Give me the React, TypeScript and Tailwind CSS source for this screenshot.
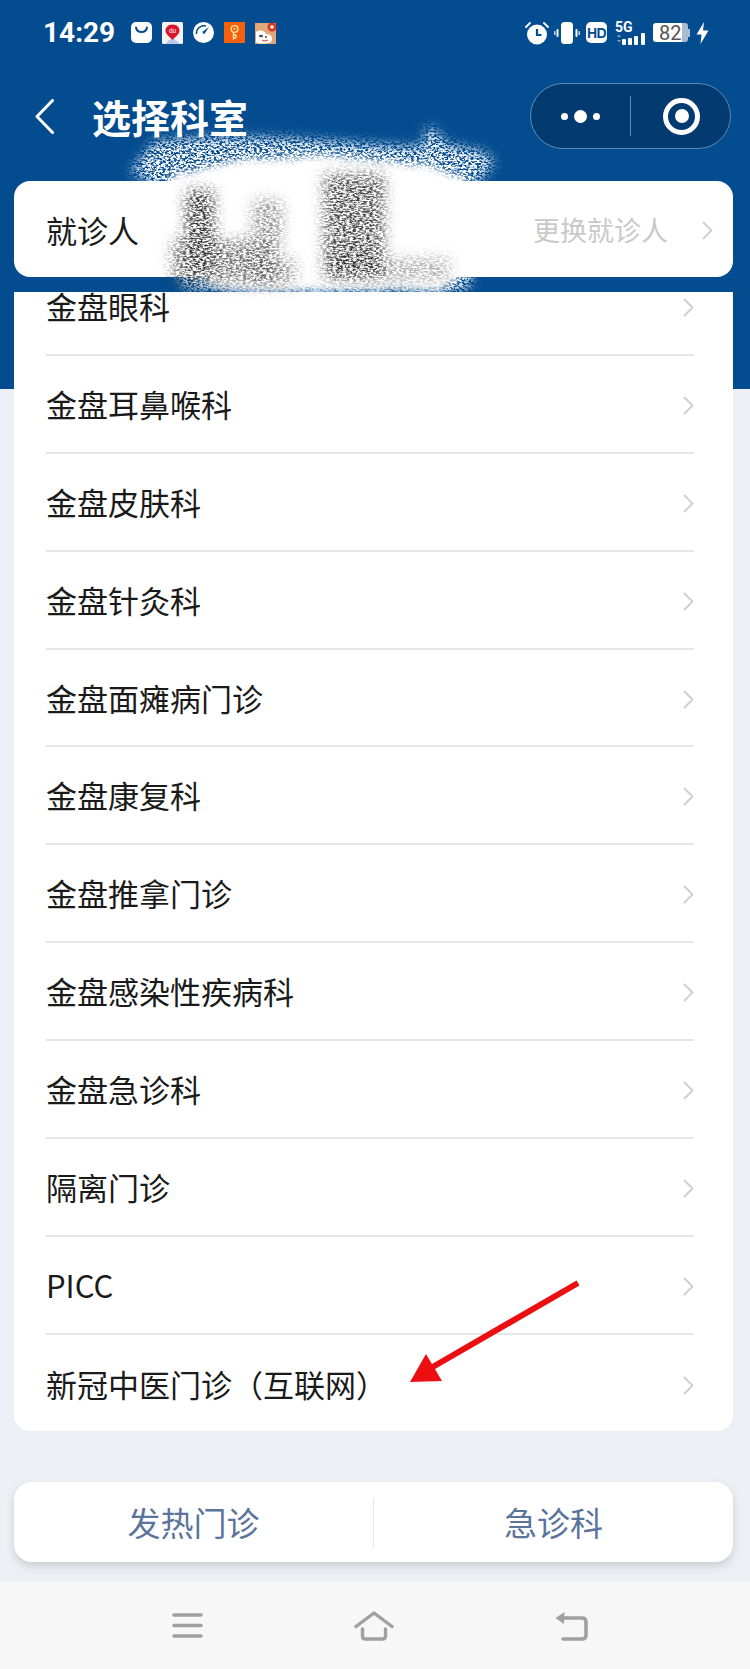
import React from "react";

const rows = [
  "金盘眼科",
  "金盘耳鼻喉科",
  "金盘皮肤科",
  "金盘针灸科",
  "金盘面瘫病门诊",
  "金盘康复科",
  "金盘推拿门诊",
  "金盘感染性疾病科",
  "金盘急诊科",
  "隔离门诊",
  "PICC",
  "新冠中医门诊（互联网）",
];

function Chevron({ color = "#cfcfcf" }: { color?: string }) {
  return (
    <svg width="11" height="19" viewBox="0 0 11 19" fill="none" className="shrink-0">
      <path d="M1.5 1.5 L9.5 9.5 L1.5 17.5" stroke={color} strokeWidth="1.8" strokeLinecap="round" strokeLinejoin="round" />
    </svg>
  );
}

function LeftIcons() {
  return (
    <div className="flex items-center gap-[10px] ml-[16px] -mt-[1px]">
      <svg width="21" height="21" viewBox="0 0 21 21">
        <rect width="21" height="21" rx="5" fill="#fff" />
        <path d="M5 5.5 C6 11.5 15 11.5 16 5.5" fill="none" stroke="#034c8f" strokeWidth="2" strokeLinecap="round" />
      </svg>
      <svg width="21" height="22" viewBox="0 0 21 22">
        <rect width="21" height="22" rx="1.5" fill="#f6f3f4" />
        <path d="M3 22 L10.5 15 L18 22 Z" fill="#b9c9ee" />
        <path d="M10.5 2.5 C6 2.5 3.5 5.5 3.5 8.8 C3.5 12.5 8 15 10.5 18 C13 15 17.5 12.5 17.5 8.8 C17.5 5.5 15 2.5 10.5 2.5 Z" fill="#d8162c" />
        <text x="10.5" y="10.5" textAnchor="middle" fontSize="6.5" fill="#fff" fontFamily="Liberation Sans">du</text>
      </svg>
      <svg width="21" height="21" viewBox="0 0 21 21">
        <circle cx="10.5" cy="10.5" r="10.5" fill="#fff" />
        <path d="M3.5 12 A7.5 7.5 0 0 1 13 4" fill="none" stroke="#034c8f" strokeWidth="1.5" />
        <path d="M16 5 L9.2 10 L11.2 12.2 Z" fill="#034c8f" />
      </svg>
      <svg width="21" height="21" viewBox="0 0 21 21">
        <rect width="21" height="21" fill="#f4600c" />
        <circle cx="10.5" cy="7" r="3.4" fill="none" stroke="#fbe3a8" strokeWidth="1.4" />
        <circle cx="10.5" cy="7" r="1" fill="#fbe3a8" />
        <path d="M9.5 10.5 V17.5 M9.5 12.5 C13 12.5 13 16.5 9.5 16" fill="none" stroke="#fbe3a8" strokeWidth="1.4" />
      </svg>
      <svg width="22" height="22" viewBox="0 0 22 22">
        <rect width="21" height="21" y="1" fill="#e0a878" />
        <path d="M1 10 C5 7 10 9 11 12 C16 12 19 16 16 20 C11 22 3 22 1 20 Z" fill="#fff" />
        <ellipse cx="6" cy="14" rx="2.2" ry="1.2" fill="#555" />
        <circle cx="11" cy="15" r="0.9" fill="#333" />
        <path d="M7 18 C9 19.5 11 19 13 18" stroke="#c66" strokeWidth="1.2" fill="none" />
        <circle cx="17" cy="5" r="4.5" fill="#d9381e" />
        <circle cx="17" cy="5" r="1.8" fill="#fff" />
      </svg>
    </div>
  );
}

function RightIcons() {
  return (
    <div className="ml-auto mr-[41px] flex items-center -mt-[1px]">
      <svg width="24" height="24" viewBox="0 0 24 24">
        <circle cx="12" cy="13.5" r="10" fill="#fff" />
        <path d="M12 8 V14 H16.5" fill="none" stroke="#034c8f" strokeWidth="2.2" />
        <path d="M1 6 L5 2 M23 6 L19 2" stroke="#fff" strokeWidth="1.8" strokeLinecap="round" />
      </svg>
      <svg width="26" height="22" viewBox="0 0 26 22" className="ml-[5px]">
        <rect x="7" y="0" width="12" height="22" rx="3.5" fill="#fff" />
        <path d="M3.5 8 V14 M22.5 8 V14" stroke="#fff" strokeWidth="2" strokeLinecap="round" />
        <path d="M0.8 9.5 V12.5 M25.2 9.5 V12.5" stroke="#fff" strokeWidth="1.2" strokeLinecap="round" />
      </svg>
      <div className="ml-[6px] w-[21px] h-[21px] rounded-[5px] bg-white flex items-center justify-center text-[#034c8f] text-[14px] leading-none font-bold tracking-[-0.5px] font-['Liberation_Sans',sans-serif]">
        HD
      </div>
      <div className="ml-[8px] w-[32px] h-[24px] flex flex-col justify-between">
        <span className="text-white text-[14px] leading-[12px] font-bold font-['Roboto',sans-serif]">5G</span>
        <svg width="32" height="12" viewBox="0 0 32 12">
          <path d="M2 4 L4 1.5 L6 4 Z" fill="#7fa3c9" />
          <path d="M2 7 L4 9.5 L6 7 Z" fill="#7fa3c9" />
          <rect x="7" y="6" width="4" height="6" rx="1" fill="#fff" />
          <rect x="13" y="5" width="4" height="7" rx="1" fill="#fff" />
          <rect x="19" y="3" width="4" height="9" rx="1" fill="#fff" />
          <rect x="26" y="0" width="4" height="12" rx="1" fill="#fff" />
        </svg>
      </div>
      <div className="ml-[6px] flex items-center">
        <div className="w-[35px] h-[19px] rounded-[3px] bg-[linear-gradient(90deg,#fff_0,#fff_84%,#a9bcd2_84%)] flex items-center pl-[6px] text-[#555] text-[20px] leading-none font-['Roboto',sans-serif]">
          82
        </div>
        <div className="w-[2px] h-[8px] bg-[#a9bcd2]" />
      </div>
      <svg width="13" height="22" viewBox="0 0 13 22" className="ml-[6px]">
        <path d="M8 0 L0.5 12.5 H5.5 L4.5 22 L12.5 8.5 H7 Z" fill="#fff" />
      </svg>
    </div>
  );
}

function Scribble() {
  return (
    <svg width="750" height="320" viewBox="0 0 750 320" className="absolute left-0 top-0 pointer-events-none">
      <defs>
        <filter id="outer" x="-10%" y="-10%" width="120%" height="120%">
          <feGaussianBlur in="SourceGraphic" stdDeviation="6" result="b" />
          <feTurbulence type="fractalNoise" baseFrequency="0.35 0.55" numOctaves="4" seed="21" />
          <feColorMatrix values="0 0 0 0 0  0 0 0 0 0  0 0 0 0 0  5 0 0 0 -1.9" result="g" />
          <feComposite in="b" in2="g" operator="in" />
          <feGaussianBlur stdDeviation="0.6" />
        </filter>
        <filter id="core" x="-10%" y="-10%" width="120%" height="120%">
          <feTurbulence type="fractalNoise" baseFrequency="0.22" numOctaves="3" seed="7" result="n" />
          <feDisplacementMap in="SourceGraphic" in2="n" scale="14" xChannelSelector="R" yChannelSelector="G" />
          <feGaussianBlur stdDeviation="3.5" />
        </filter>
        <filter id="dark" x="-20%" y="-20%" width="140%" height="140%">
          <feGaussianBlur in="SourceGraphic" stdDeviation="7" result="b" />
          <feTurbulence type="fractalNoise" baseFrequency="0.3 0.6" numOctaves="4" seed="13" />
          <feColorMatrix values="0 0 0 0 0  0 0 0 0 0  0 0 0 0 0  3.4 0 0 0 -1.25" result="g" />
          <feComposite in="b" in2="g" operator="in" />
          <feGaussianBlur stdDeviation="0.5" />
        </filter>
      </defs>
      <g filter="url(#outer)" fill="#fff">
        <path d="M130 172 L155 141 L225 136 L300 139 L400 146 L424 146 L426 128 L434 128 L446 144 L482 151 L495 162 L478 182 L472 240 L470 288 L452 293 L285 293 L185 289 L170 250 L150 181 Z" />
      </g>
      <g filter="url(#core)" fill="#fff">
        <path d="M170 176 L240 160 L330 156 L430 166 L466 180 L460 278 L440 289 L260 291 L215 288 L180 262 Z" />
      </g>
      <g filter="url(#dark)" fill="#262626">
        <rect x="186" y="190" width="28" height="84" opacity="1" />
        <rect x="172" y="240" width="105" height="44" opacity="0.65" />
        <rect x="252" y="200" width="30" height="42" opacity="0.5" />
        <rect x="250" y="258" width="46" height="28" opacity="0.45" />
        <rect x="324" y="174" width="60" height="106" opacity="0.85" />
        <rect x="332" y="256" width="44" height="18" opacity="1" />
        <rect x="382" y="258" width="68" height="24" opacity="0.4" />
      </g>
    </svg>
  );
}

function RedArrow() {
  return (
    <svg width="750" height="1669" viewBox="0 0 750 1669" className="absolute left-0 top-0 pointer-events-none">
      <path d="M578 1283 L424 1372" stroke="#ec0f12" strokeWidth="6" fill="none" />
      <path d="M410 1382 L426 1354 L442 1381 Z" fill="#ec0f12" />
    </svg>
  );
}

export default function App() {
  return (
    <div className="relative w-[750px] h-[1669px] overflow-hidden flex flex-col bg-[linear-gradient(#034c8f_389px,#eeeff4_389px)] font-['Noto_Sans_CJK_SC','Noto_Sans',sans-serif]">
      {/* status bar */}
      <div className="h-[66px] flex items-center pl-[43px] shrink-0">
        <span className="text-white text-[28px] font-bold leading-none font-['Roboto',sans-serif]">14:29</span>
        <LeftIcons />
        <RightIcons />
      </div>

      {/* title bar */}
      <div className="mt-[17px] h-[66px] flex items-center shrink-0 pl-[35px] pr-[19px]">
        <svg width="19" height="35" viewBox="0 0 19 35" fill="none" className="shrink-0">
          <path d="M17.5 1.5 L2 17.5 L17.5 33.5" stroke="#fff" strokeWidth="3" strokeLinecap="round" strokeLinejoin="round" />
        </svg>
        <span className="ml-[38px] text-white text-[39px] font-semibold leading-none">选择科室</span>
        <div className="ml-auto w-[201px] h-[66px] rounded-[33px] border border-[#5f8bb8] bg-[#033a70] flex items-center">
          <div className="w-[99px] flex items-center justify-center gap-[6px] pt-[1px]">
            <span className="w-[7px] h-[7px] rounded-full bg-white" />
            <span className="w-[13px] h-[13px] rounded-full bg-white" />
            <span className="w-[7px] h-[7px] rounded-full bg-white" />
          </div>
          <div className="w-px h-[40px] bg-[#5f8bb8]" />
          <div className="flex-1 flex items-center justify-center pl-[2px]">
            <div className="w-[37px] h-[37px] rounded-full border-[5px] border-white flex items-center justify-center">
              <span className="w-[14px] h-[14px] rounded-full bg-white" />
            </div>
          </div>
        </div>
      </div>

      {/* patient card */}
      <div className="mt-[32px] ml-[14px] mr-[17px] h-[96px] rounded-[16px] bg-white flex items-center pl-[32px] pr-[20px] shrink-0">
        <span className="text-[31px] leading-none text-[#1a1a1a]">就诊人</span>
        <span className="ml-auto text-[27px] leading-none text-[#c9c9c9]">更换就诊人</span>
        <span className="ml-[34px] mt-[2px]"><Chevron /></span>
      </div>

      {/* department list */}
      <div className="mt-[15px] ml-[14px] mr-[17px] h-[1139px] rounded-b-[16px] bg-white overflow-hidden pl-[32px] pr-[39px] shrink-0">
        <div className="-mt-[34px]">
          {rows.map((r, i) => (
            <div
              key={r}
              className={
                i === rows.length - 1
                  ? "h-[97.9px] flex items-center justify-between"
                  : "h-[97.9px] flex items-center justify-between border-b-2 border-[#e6e6e6]"
              }
            >
              <span className="text-[31px] leading-[26px] text-[#1a1a1a]">{r}</span>
              <span className="mt-[3px]"><Chevron /></span>
            </div>
          ))}
        </div>
      </div>

      {/* bottom buttons */}
      <div className="mt-[51px] ml-[14px] mr-[17px] h-[80px] rounded-[18px] bg-white shadow-[0_4px_8px_rgba(0,0,0,0.14)] flex items-center shrink-0">
        <div className="flex-1 text-center text-[33px] leading-none text-[#5b749b]">发热门诊</div>
        <div className="w-px h-[49px] bg-[#e4e4e4]" />
        <div className="flex-1 text-center text-[33px] leading-none text-[#5b749b]">急诊科</div>
      </div>

      {/* system nav */}
      <div className="mt-[20px] h-[87px] bg-[#f7f7f8] flex items-center pl-[172px] shrink-0">
        <svg width="31" height="25" viewBox="0 0 31 25" fill="none">
          <path d="M2 2 H29 M2 12.5 H29 M2 23 H29" stroke="#a0a0a0" strokeWidth="3.6" strokeLinecap="round" />
        </svg>
        <svg width="40" height="30" viewBox="0 0 40 30" fill="none" className="ml-[151px]">
          <path d="M2 15.5 L20 2 L38 15.5" stroke="#a0a0a0" strokeWidth="3.4" strokeLinecap="round" strokeLinejoin="round" />
          <path d="M8.5 18 V25 Q8.5 28 11.5 28 H28.5 Q31.5 28 31.5 25 V18" stroke="#a0a0a0" strokeWidth="3.4" strokeLinecap="round" />
        </svg>
        <svg width="33" height="30" viewBox="0 0 33 30" fill="none" className="ml-[161px]">
          <path d="M0.5 7 L9.5 1 L9 13 Z" fill="#a0a0a0" />
          <path d="M8 7 H27 Q31 7 31 11 V24 Q31 28 27 28 H8" stroke="#a0a0a0" strokeWidth="3.6" strokeLinecap="round" />
        </svg>
      </div>

      <Scribble />
      <RedArrow />
    </div>
  );
}
